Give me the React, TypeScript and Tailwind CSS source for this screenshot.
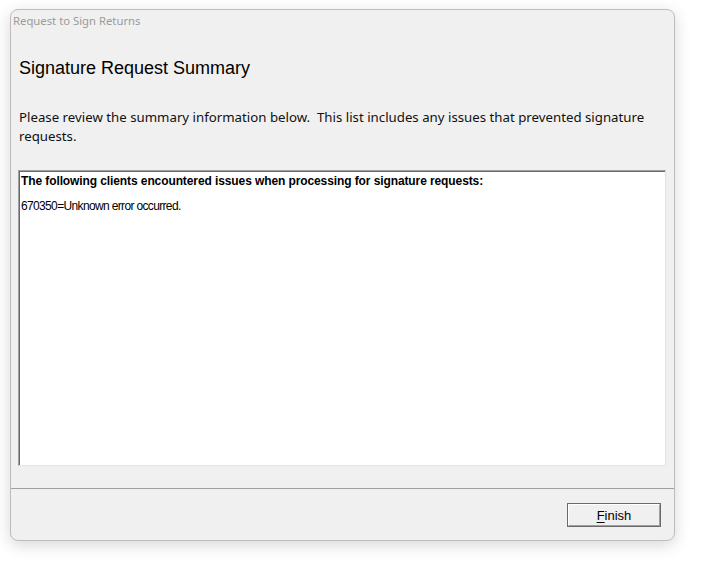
import React from "react";

const uiFont = { fontFamily: '"Noto Sans", "Open Sans", sans-serif' };
const classicFont = { fontFamily: '"Liberation Sans", Arial, sans-serif' };

const issues = ["670350=Unknown error occurred."];

const FinishButton: React.FC = () => (
  <button
    className="w-[94px] h-[24px] border border-[#6b6b6b] bg-[#f0f0f0] text-[13px] text-black p-0"
    style={classicFont}
  >
    <span className="flex items-center justify-center w-full h-full border-t border-l border-t-white border-l-white border-r border-b border-r-[#a0a0a0] border-b-[#a0a0a0]">
      <span className="translate-y-[1px]">
        <span className="underline underline-offset-2">F</span>inish
      </span>
    </span>
  </button>
);

export default function App() {
  return (
    <div className="w-[728px] h-[561px] bg-white overflow-hidden">
      <div className="ml-[10px] mt-[9px] w-[665px] h-[532px] rounded-[8px] border border-[#bdbdbd] bg-[#f0f0f0] shadow-[0_4px_16px_rgba(0,0,0,0.16)] flex flex-col">
        {/* title bar */}
        <div
          className="h-[22px] pl-[2px] flex items-center text-[11.3px] text-[#9b9b9b]"
          style={uiFont}
        >
          Request to Sign Returns
        </div>

        <div
          className="mt-[26px] ml-[8px] text-[18px] leading-[21px] text-black"
          style={classicFont}
        >
          Signature Request Summary
        </div>

        <p
          className="mt-[29px] ml-[8px] mr-[10px] text-[13.25px] leading-[19px] text-[#111]"
          style={uiFont}
        >
          Please review the summary information below.&nbsp; This list includes
          any issues that prevented signature requests.
        </p>

        {/* sunken list box */}
        <div className="mt-[24px] ml-[7px] w-[648px] h-[296px] border-t border-l border-t-[#a0a0a0] border-l-[#a0a0a0] border-r border-b border-r-[#e3e3e3] border-b-[#e3e3e3]">
          <div
            className="w-full h-full bg-white border-t border-l border-t-[#696969] border-l-[#696969] px-[1px] pt-[2px] text-black"
            style={classicFont}
          >
            <div className="text-[12px] leading-[14px] font-bold tracking-[-0.1px]">
              The following clients encountered issues when processing for
              signature requests:
            </div>
            <div className="mt-[11px]">
              {issues.map((line) => (
                <div key={line} className="text-[12px] leading-[14px] tracking-[-0.65px]">
                  {line}
                </div>
              ))}
            </div>
          </div>
        </div>

        <div className="mt-[22px] h-px bg-[#a0a0a0]" />

        <div className="flex justify-end pr-[13px] pt-[14px]">
          <FinishButton />
        </div>
      </div>
    </div>
  );
}
